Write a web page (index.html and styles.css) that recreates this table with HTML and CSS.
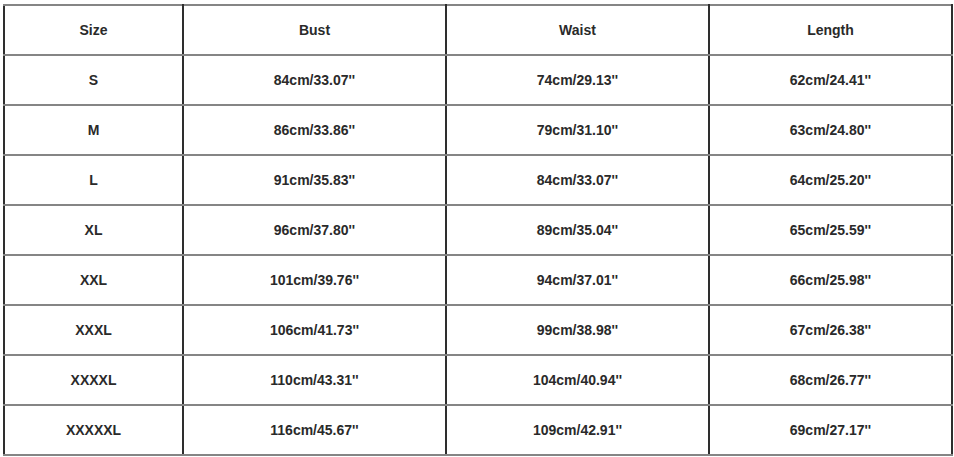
FILE: index.html
```html
<!DOCTYPE html>
<html>
<head>
<meta charset="utf-8">
<link rel="stylesheet" href="styles.css">
</head>
<body>
<table class="size-table">
  <colgroup>
    <col class="c-size">
    <col class="c-bust">
    <col class="c-waist">
    <col class="c-length">
  </colgroup>
  <tr><td>Size</td><td>Bust</td><td>Waist</td><td>Length</td></tr>
  <tr><td>S</td><td>84cm/33.07''</td><td>74cm/29.13''</td><td>62cm/24.41''</td></tr>
  <tr><td>M</td><td>86cm/33.86''</td><td>79cm/31.10''</td><td>63cm/24.80''</td></tr>
  <tr><td>L</td><td>91cm/35.83''</td><td>84cm/33.07''</td><td>64cm/25.20''</td></tr>
  <tr><td>XL</td><td>96cm/37.80''</td><td>89cm/35.04''</td><td>65cm/25.59''</td></tr>
  <tr><td>XXL</td><td>101cm/39.76''</td><td>94cm/37.01''</td><td>66cm/25.98''</td></tr>
  <tr><td>XXXL</td><td>106cm/41.73''</td><td>99cm/38.98''</td><td>67cm/26.38''</td></tr>
  <tr><td>XXXXL</td><td>110cm/43.31''</td><td>104cm/40.94''</td><td>68cm/26.77''</td></tr>
  <tr><td>XXXXXL</td><td>116cm/45.67''</td><td>109cm/42.91''</td><td>69cm/27.17''</td></tr>
</table>
</body>
</html>
```
FILE: styles.css
```css
html, body {
  margin: 0;
  padding: 0;
  background: #ffffff;
}
body {
  padding: 4px 0 0 3px;
}
.size-table {
  border-collapse: collapse;
  table-layout: fixed;
  width: 948px;
  font-family: "Liberation Sans", Arial, sans-serif;
  font-weight: bold;
  font-size: 14px;
  color: #2a2a2a;
}
.c-size { width: 179px; }
.c-bust { width: 263px; }
.c-waist { width: 263px; }
.c-length { width: 243px; }
.size-table td {
  height: 47px;
  padding: 0 0 1px 0;
  text-align: center;
  vertical-align: middle;
  border-top: 2px solid #858585;
  border-bottom: 2px solid #858585;
  border-left: 2px solid #2e2e2e;
  border-right: 2px solid #2e2e2e;
}
```
